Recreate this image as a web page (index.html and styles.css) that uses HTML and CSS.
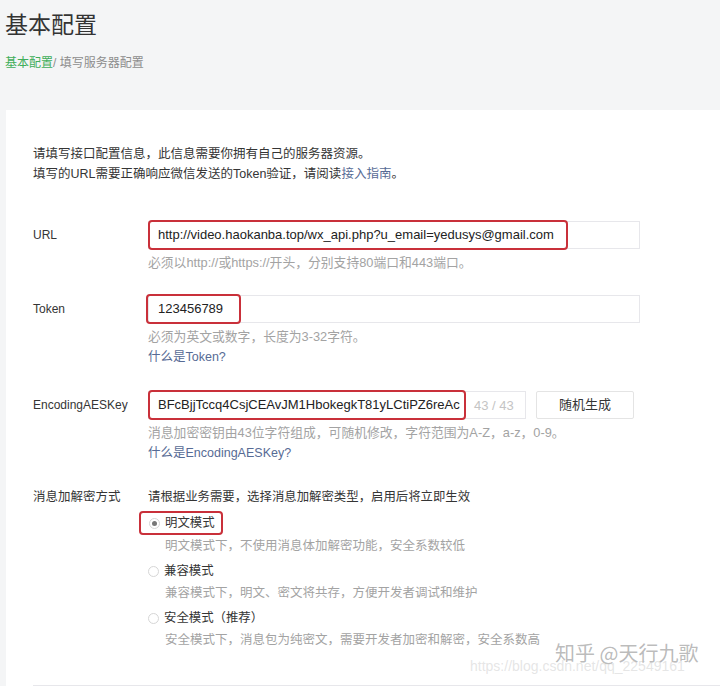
FILE: index.html
```html
<!doctype html>
<html>
<head>
<meta charset="utf-8">
<title>基本配置</title>
<link rel="stylesheet" href="styles.css">
</head>

<body>
<div class="page">
    <h1 class="title">基本配置</h1>
    <div class="crumb"><span class="crumb-home">基本配置</span>/ 填写服务器配置</div>

    <div class="card">
        <div class="intro">
            <p>请填写接口配置信息，此信息需要你拥有自己的服务器资源。</p>
            <p>填写的URL需要正确响应微信发送的Token验证，请阅读<a class="link">接入指南</a>。</p>
        </div>

        <div class="row row-url">
            <div class="label">URL</div>
            <div class="ctrl">
                <div class="input">
                    <span class="mark mark-url">http://video.haokanba.top/wx_api.php?u_email=yedusys@gmail.com</span>
                </div>
                <div class="hint">必须以http://或https://开头，分别支持80端口和443端口。</div>
            </div>
        </div>

        <div class="row row-token">
            <div class="label">Token</div>
            <div class="ctrl">
                <div class="input">
                    <span class="mark mark-token">123456789</span>
                </div>
                <div class="hint">必须为英文或数字，长度为3-32字符。</div>
                <a class="link">什么是Token?</a>
            </div>
        </div>

        <div class="row row-aes">
            <div class="label">EncodingAESKey</div>
            <div class="ctrl">
                <div class="aes-line">
                    <div class="input input-aes">
                        <span class="mark mark-aes">BFcBjjTccq4CsjCEAvJM1HbokegkT81yLCtiPZ6reAc</span>
                        <span class="count">43 / 43</span>
                    </div>
                    <div class="btn">随机生成</div>
                </div>
                <div class="hint">消息加密密钥由43位字符组成，可随机修改，字符范围为A-Z，a-z，0-9。</div>
                <a class="link">什么是EncodingAESKey?</a>
            </div>
        </div>

        <div class="row row-mode">
            <div class="label">消息加解密方式</div>
            <div class="ctrl">
                <div class="mode-tip">请根据业务需要，选择消息加解密类型，启用后将立即生效</div>
                <div class="option option-first">
                    <span class="mark mark-radio"><i class="radio checked"></i>明文模式</span>
                </div>
                <div class="desc">明文模式下，不使用消息体加解密功能，安全系数较低</div>
                <div class="option"><i class="radio"></i>兼容模式</div>
                <div class="desc">兼容模式下，明文、密文将共存，方便开发者调试和维护</div>
                <div class="option"><i class="radio"></i>安全模式（推荐）</div>
                <div class="desc">安全模式下，消息包为纯密文，需要开发者加密和解密，安全系数高</div>
            </div>
        </div>

        <div class="foot"></div>
    </div>

    <div class="watermark">知乎 @天行九歌</div>
    <div class="watermark-url">https://blog.csdn.net/qq_22549161</div>
</div>
</body>
</html>
```

FILE: styles.css
```css
html, body { margin: 0; padding: 0; }
body { font-family: "Liberation Sans", "Noto Sans CJK SC", sans-serif; color: #353535; background-color: #f4f5f6; }
.page { position: relative; width: 720px; height: 686px; overflow: hidden; }
.title { font-size: 23px; font-weight: normal; color: #333; margin: 0; padding: 10px 0 0 5px; line-height: 30px; }
.crumb { font-size: 12px; color: #8d8d8d; padding-left: 5px; margin-top: 13px; line-height: 20px; }
.crumb-home { color: #3fae5a; }
.card { background-color: #fff; margin: 37px 0 0 6px; padding: 35px 0 0 27px; height: 600px; }
.intro { font-size: 12.5px; line-height: 19px; color: #353535; }
.intro p { margin: 0; }
.link { color: #576b95; text-decoration: none; font-size: 12.5px; line-height: 20px; display: block; }
.intro .link { display: inline; font-size: inherit; }
.row { display: flex; }
.label { width: 115px; flex: none; font-size: 12px; line-height: 28px; color: #353535; }
.ctrl { flex: none; }
.row-url { margin-top: 37px; }
.row-token { margin-top: 22px; }
.row-aes { margin-top: 24px; }
.row-mode { margin-top: 24px; }
.row-mode .label { line-height: 20px; font-size: 12.5px; }
.input { width: 492px; height: 28px; box-sizing: border-box; border: 1px solid #e7e7eb; display: flex; align-items: center; font-size: 13px; color: #222; }
.mark { border: 2px solid #c9303a; border-radius: 4px; box-sizing: border-box; }
.mark-url { margin-left: -1px; height: 30px; width: 420px; line-height: 26px; padding-left: 8px; }
.mark-token { margin-left: -3px; height: 30px; width: 95px; line-height: 26px; padding-left: 10px; }
.aes-line { display: flex; align-items: center; }
.input-aes { width: 378px; }
.mark-aes { margin-left: -1px; height: 30px; width: 318px; line-height: 26px; padding-left: 8px; white-space: nowrap; }
.count { color: #c4c4c4; font-size: 13px; padding-left: 8px; }
.btn { margin-left: 10px; width: 98px; height: 28px; box-sizing: border-box; border: 1px solid #e4e4e4; border-radius: 2px; text-align: center; line-height: 26px; font-size: 13px; color: #353535; }
.hint { font-size: 12.8px; line-height: 20px; color: #a3a3a3; margin-top: 4px; }
.mode-tip { font-size: 12.4px; line-height: 20px; color: #353535; }
.option { font-size: 12.4px; line-height: 22px; color: #353535; margin-top: 3px; display: flex; align-items: center; }
.option-first { margin-top: 4px; margin-left: -9px; }
.mark-radio { display: flex; align-items: center; height: 24px; padding: 0 6px 0 8px; }
.radio { width: 9px; height: 9px; border: 1px solid #d6d6d6; border-radius: 50%; margin-right: 5px; position: relative; background: #fff; }
.radio.checked::after { content: ""; position: absolute; left: 2px; top: 2px; width: 5px; height: 5px; border-radius: 50%; background: #777; }
.desc { font-size: 12.5px; line-height: 22px; color: #a3a3a3; padding-left: 17px; }
.foot { border-top: 1px solid #e7e7eb; margin-top: 34px; }
.watermark { position: absolute; left: 555px; top: 639px; font-size: 20px; line-height: 28px; white-space: nowrap; color: rgba(130, 130, 130, 0.55); font-family: "Noto Sans CJK SC", sans-serif; }
.watermark-url { position: absolute; left: 470px; top: 657px; font-size: 14px; line-height: 18px; white-space: nowrap; color: rgba(190, 190, 190, 0.4); }
```
